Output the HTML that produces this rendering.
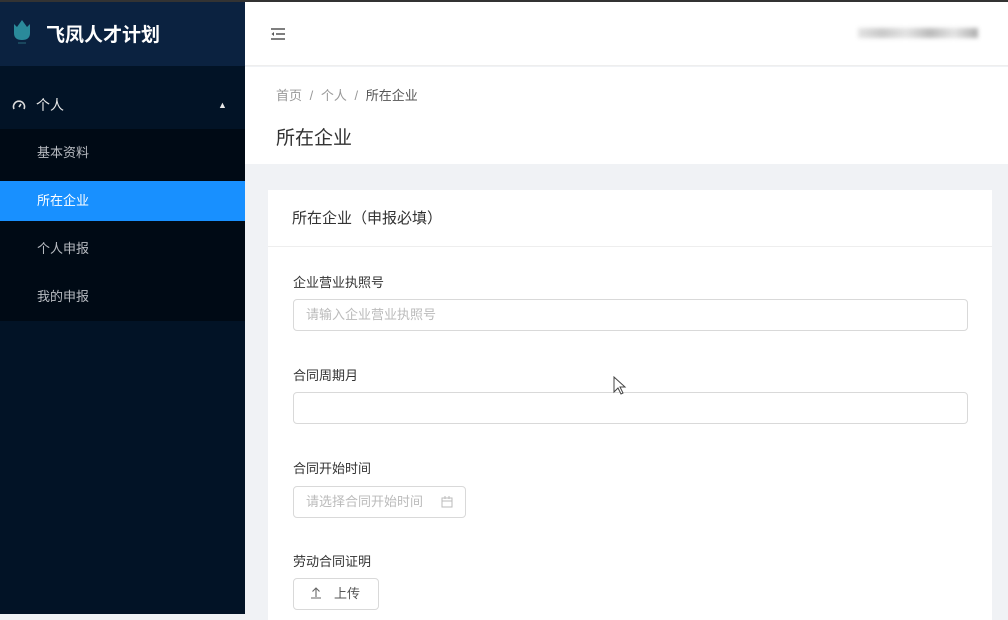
<!DOCTYPE html>
<html><head><meta charset="utf-8"><style>
*{margin:0;padding:0;box-sizing:border-box}
body{width:1008px;height:614px;overflow:hidden;font-family:"Liberation Sans","Noto Sans CJK SC",sans-serif;background:#f0f2f5;position:relative}
.top{position:absolute;left:0;top:0;width:1008px;height:2px;background:#333;z-index:5}
.side{position:absolute;left:0;top:0;width:245px;height:614px;background:#021326}
.logo{height:66px;background:#0b2240;display:flex;align-items:center;padding-left:12px;color:#fff;font-weight:bold;font-size:19px}
.menu{position:absolute;top:82px;left:0;width:245px;height:46px;display:flex;align-items:center;color:#e8e8e8;font-size:14px;padding-left:12px}
.sub{position:absolute;top:129px;left:0;width:245px;height:192px;background:#000a15}
.sub div{height:48px;line-height:48px;padding-left:37px;color:#b8bcc2;font-size:13px}
.sub div.act{background:#1890ff;color:#fff;height:40px;line-height:40px;margin:4px 0}
.hdr{position:absolute;left:245px;top:0;right:0;height:66px;background:#fff;border-bottom:1px solid #eee}
.bc{position:absolute;left:245px;top:67px;right:0;height:97px;background:#fff}
.card{position:absolute;left:268px;top:190px;width:724px;height:430px;background:#fff}
.ct{height:57px;border-bottom:1px solid #eee;padding-left:24px;line-height:57px;font-size:15px;color:#333}
.lbl{position:absolute;left:25px;font-size:13px;color:#333}
.inp{position:absolute;left:25px;height:32px;border:1px solid #d9d9d9;border-radius:4px;font-size:13px;color:#bbb;padding-left:12px;line-height:30px}
</style></head><body>
<div class="top"></div>
<div class="side">
<div class="logo"><svg width="20" height="28" viewBox="0 0 20 28" style="margin-right:14px"><path d="M2 5l3 3 5-7 5 7 3-3v9c0 5-3 7-8 7s-8-2-8-7z" fill="#2a8a9a"/><path d="M6 24h8" stroke="#2a6a7a" stroke-width="1"/></svg>飞凤人才计划</div>
<div class="menu"><svg width="14" height="14" viewBox="0 0 14 14" style="margin-right:10px"><path d="M2 11a5.5 5.5 0 1 1 10 0" stroke="#ddd" stroke-width="1.6" fill="none"/><path d="M7 9l2-3" stroke="#ddd" stroke-width="1.6"/></svg>个人<span style="position:absolute;left:218px;font-size:9px">▲</span></div>
<div class="sub"><div>基本资料</div><div class="act">所在企业</div><div>个人申报</div><div>我的申报</div></div>
</div>
<div class="hdr">
<svg width="14" height="12" viewBox="0 0 14 12" style="position:absolute;left:26px;top:28px"><path d="M0 1h14M5 6h9M0 11h14" stroke="#555" stroke-width="1.4"/><path d="M3 4L0.5 6 3 8z" fill="#555"/></svg>
<div style="position:absolute;left:613px;top:28px;width:120px;height:10px;background:linear-gradient(90deg,#ddd,#bbb 20%,#ddd 40%,#aaa 60%,#ddd 80%,#999);filter:blur(2px);opacity:.8"></div>
</div>
<div class="bc">
<div style="position:absolute;left:31px;top:18px;font-size:13px;color:#999">首页 <span style="margin:0 4px">/</span> 个人 <span style="margin:0 4px">/</span> <span style="color:#555">所在企业</span></div>
<div style="position:absolute;left:31px;top:56px;font-size:19px;color:#333">所在企业</div>
</div>
<div class="card">
<div class="ct">所在企业（申报必填）</div>
<div class="lbl" style="top:82px">企业营业执照号</div>
<div class="inp" style="top:109px;width:675px">请输入企业营业执照号</div>
<div class="lbl" style="top:175px">合同周期月</div>
<div class="inp" style="top:202px;width:675px"></div>
<div class="lbl" style="top:268px">合同开始时间</div>
<div class="inp" style="top:296px;width:173px">请选择合同开始时间<svg width="12" height="12" viewBox="0 0 12 12" style="position:absolute;left:147px;top:9px"><rect x="1" y="2" width="10" height="9" fill="none" stroke="#bbb"/><path d="M1 5h10M4 0v3M8 0v3" stroke="#bbb"/></svg></div>
<div class="lbl" style="top:361px">劳动合同证明</div>
<div class="inp" style="top:388px;width:86px;color:#555;padding-left:16px"><svg width="12" height="12" viewBox="0 0 12 12" style="vertical-align:-1px"><path d="M6 10V1M2.5 4.5L6 1l3.5 3.5M1 11h10" stroke="#666" fill="none" stroke-width="1.1"/></svg><span style="margin-left:12px">上传</span></div>
</div>
<svg width="14" height="20" viewBox="0 0 14 20" style="position:absolute;left:613px;top:376px"><path d="M1 1v15l4-4 3 6 2-1-3-6h5z" fill="#fff" stroke="#444"/></svg>
</body></html>
